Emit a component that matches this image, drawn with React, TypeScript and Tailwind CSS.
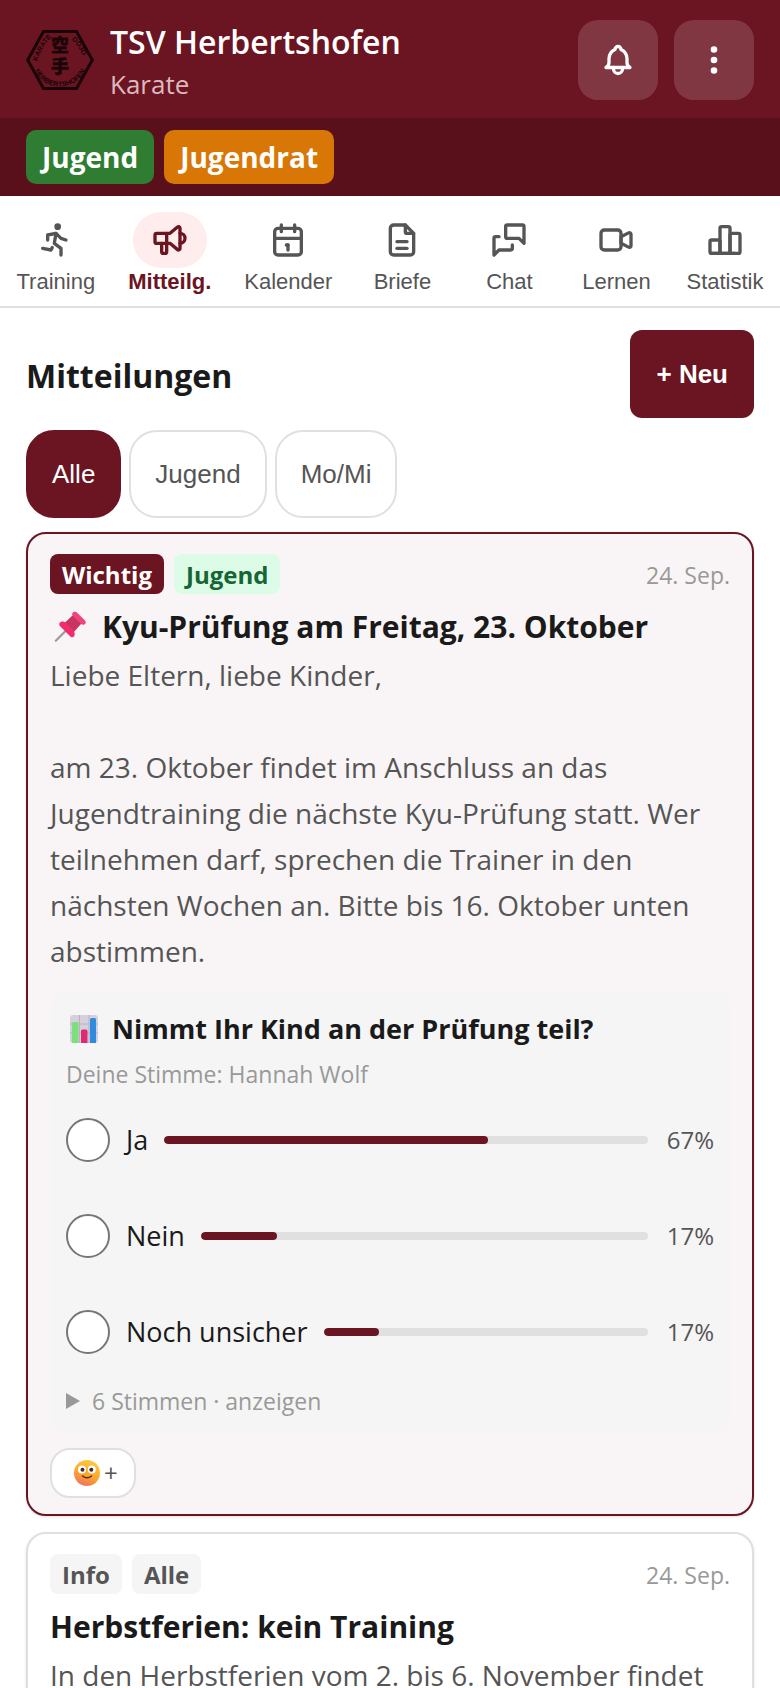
import React from "react";
import type { IconType } from "react-icons";
import {
  TbBell,
  TbCalendar,
  TbChartBar,
  TbDotsVertical,
  TbFileDescription,
  TbMessages,
  TbRun,
  TbSpeakerphone,
  TbVideo,
} from "react-icons/tb";

interface NavItem {
  label: string;
  icon: IconType;
  active?: boolean;
}

interface PollOption {
  id: string;
  label: string;
  percent: number;
}

interface Tag {
  label: string;
  className: string;
}

interface CardProps {
  tags: Tag[];
  date: string;
  title: string;
  text: string;
  pinned?: boolean;
  children?: React.ReactNode;
}

const navItems: NavItem[] = [
  { label: "Training", icon: TbRun },
  { label: "Mitteilg.", icon: TbSpeakerphone, active: true },
  { label: "Kalender", icon: TbCalendar },
  { label: "Briefe", icon: TbFileDescription },
  { label: "Chat", icon: TbMessages },
  { label: "Lernen", icon: TbVideo },
  { label: "Statistik", icon: TbChartBar },
];

const filters = ["Alle", "Jugend", "Mo/Mi"];

const pollOptions: PollOption[] = [
  { id: "ja", label: "Ja", percent: 67 },
  { id: "nein", label: "Nein", percent: 17 },
  { id: "unsicher", label: "Noch unsicher", percent: 17 },
];

const Logo = () => (
  <svg viewBox="0 0 68 60" className="h-[60px] w-[68px] shrink-0" role="img" aria-label="Karate Dojo Herbertshofen">
    <defs>
      <path id="logo-left" d="M11 33Q14 18 27 6" />
      <path id="logo-right" d="M42 7Q53 14 58 30" />
      <path id="logo-bottom" d="M8 37C15 63 53 63 60 37" />
    </defs>
    <path d="M17.5 1.5h33L66.3 30 50.5 58.5h-33L1.7 30z" fill="none" stroke="#190407" strokeWidth="3" />
    <g fill="#190407" fontFamily="'Liberation Sans', sans-serif" fontWeight="700" fontSize="7" textAnchor="middle">
      <text>
        <textPath href="#logo-left" startOffset="50%">
          KARATE
        </textPath>
      </text>
      <text>
        <textPath href="#logo-right" startOffset="50%">
          DOJO
        </textPath>
      </text>
      <text>
        <textPath href="#logo-bottom" startOffset="50%">
          HERBERTSHOFEN
        </textPath>
      </text>
    </g>
    <g
      fill="#190407"
      stroke="#190407"
      strokeWidth="0.4"
      fontFamily="'Noto Sans CJK JP', sans-serif"
      fontWeight="900"
      fontSize="18"
      textAnchor="middle"
    >
      <text x="34" y="22">空</text>
      <text x="34" y="43">手</text>
    </g>
  </svg>
);

const PinIcon = () => (
  <svg viewBox="0 0 32 32" className="size-8 shrink-0" aria-hidden="true">
    <path d="M13 18.5 1.8 29.8" stroke="#9b9b9b" strokeWidth="2.2" strokeLinecap="round" />
    <path d="m10.5 12 8.5-8 8.5 8.5-8.5 9.5z" fill="#c8365f" />
    <path
      d="M18.2 2.6c1-2.6 3.6-2.4 5.300-.6l7 7c1.800 1.800 1.600 3.900-.3 4.600-1.300.4-2.600-.2-3.600-1.200l-7-7c-.8-.8-1.600-1.600-1.400-2.800z"
      fill="#f0447c"
    />
    <path
      d="M6.2 11.2c1.8-1.2 4.3-.7 6.2 1.2l6.4 6.4c1.900 1.900 2.600 4.600 1.300 6.400-1.200 1.700-3 1-4.300-.3L6.400 15.500c-1.300-1.300-1.700-3.200-.2-4.300z"
      fill="#f22d6c"
    />
  </svg>
);

const ChartIcon = () => (
  <svg viewBox="0 0 28 28" className="size-7 shrink-0" aria-hidden="true">
    <rect width="28" height="28" rx="3" fill="#d6d0dc" />
    <path d="M0 9h28M0 18h28M9.5 0v28M19 0v28" stroke="#b9b2c2" strokeWidth="1" />
    <path d="M2 8.500a1.500 1.500 0 0 1 1.500-1.500H7a1.500 1.500 0 0 1 1.500 1.500V28H2z" fill="#7be07a" />
    <path d="M11 16a1.500 1.500 0 0 1 1.500-1.500H16a1.500 1.500 0 0 1 1.500 1.500v12H11z" fill="#e02a70" />
    <path d="M20 4.500A1.500 1.500 0 0 1 21.500 3h3A1.500 1.500 0 0 1 26 4.500V28h-6z" fill="#2f8be0" />
  </svg>
);

const SmileyIcon = () => (
  <svg viewBox="0 0 26 26" className="size-[26px]" aria-hidden="true">
    <defs>
      <linearGradient id="smiley" x1="0.7" y1="0" x2="0.3" y2="1">
        <stop offset="0" stopColor="#ffcb3d" />
        <stop offset="0.6" stopColor="#fba32c" />
        <stop offset="1" stopColor="#ef6d6a" />
      </linearGradient>
    </defs>
    <circle cx="13" cy="13" r="13" fill="url(#smiley)" />
    <circle cx="8" cy="9.5" r="4" fill="#fff" />
    <circle cx="17.8" cy="9.5" r="4" fill="#fff" />
    <circle cx="8.5" cy="9.7" r="2" fill="#43282b" />
    <circle cx="17.3" cy="9.7" r="2" fill="#43282b" />
    <path d="M8.5 16q4.500 3.600 9 0" fill="none" stroke="#5b2b20" strokeWidth="1.5" strokeLinecap="round" />
  </svg>
);

const Header = () => (
  <header>
    <div className="flex items-center gap-4 bg-[#6b1522] px-[26px] pt-[18px] pb-4">
      <Logo />
      <div className="flex-1 text-white">
        <p className="text-[32px] leading-[48px] font-semibold">TSV Herbertshofen</p>
        <p className="text-[26px] leading-9 text-[#deb8bf]">Karate</p>
      </div>
      <button
        type="button"
        aria-label="Benachrichtigungen"
        className="flex size-20 items-center justify-center rounded-[20px] bg-white/15 text-white"
      >
        <TbBell size={36} strokeWidth={2.2} />
      </button>
      <button
        type="button"
        aria-label="Menü"
        className="flex size-20 items-center justify-center rounded-[20px] bg-white/15 text-white"
      >
        <TbDotsVertical size={36} strokeWidth={2.4} />
      </button>
    </div>
    <div className="flex gap-[10px] bg-[#5a101b] px-[26px] py-3 text-[28px] leading-[54px] font-bold text-white">
      <span className="rounded-[10px] bg-[#2e7d32] px-4">Jugend</span>
      <span className="rounded-[10px] bg-[#d97706] px-4">Jugendrat</span>
    </div>
  </header>
);

const Navigation = () => (
  <nav className="flex border-b-2 border-[#e0e0e0] bg-white pt-4 pb-[10px] font-['Liberation_Sans',sans-serif]">
    {navItems.map(({ label, icon: Icon, active }) => (
      <a
        key={label}
        href="#"
        aria-current={active ? "page" : undefined}
        className={`flex grow flex-col items-center px-3 text-[22px] leading-7 ${
          active ? "font-bold text-[#6b1522]" : "text-[#555]"
        }`}
      >
        <span className={`flex h-14 w-[74px] items-center justify-center rounded-full ${active ? "bg-[#ffecec]" : ""}`}>
          <Icon size={40} />
        </span>
        {label}
      </a>
    ))}
  </nav>
);

const MessageCard = ({ tags, date, title, text, pinned, children }: CardProps) => (
  <article
    className={`rounded-[20px] border-2 px-[22px] pt-5 pb-4 shadow-sm ${
      pinned ? "border-[#6b1522] bg-[#f9f5f6]" : "border-[#e0e0e0] bg-white"
    }`}
  >
    <div className="flex items-center gap-[10px]">
      {tags.map((tag) => (
        <span key={tag.label} className={`rounded-lg px-3 pt-0.5 text-[24px] leading-[38px] font-bold ${tag.className}`}>
          {tag.label}
        </span>
      ))}
      <time className="ml-auto pt-0.5 text-[23px] leading-[38px] text-[#999]">{date}</time>
    </div>
    <h2 className="mt-2 flex items-center gap-4 text-[30px] leading-[50px] font-bold text-[#1a1a1a]">
      {pinned && (
        <span className="pl-1">
          <PinIcon />
        </span>
      )}
      {title}
    </h2>
    <p className="text-[28px] leading-[46px] whitespace-pre-line text-[#555]">{text}</p>
    {children}
  </article>
);

const Poll = () => (
  <section className="mt-4 rounded-2xl bg-[#f5f5f5] px-4 pt-4 pb-1.5">
    <h3 className="flex items-center gap-[14px] pl-1 text-[27px] leading-[46px] font-bold text-[#1a1a1a]">
      <ChartIcon />
      Nimmt Ihr Kind an der Prüfung teil?
    </h3>
    <p className="text-[23px] leading-[44px] text-[#999]">Deine Stimme: Hannah Wolf</p>
    <div className="flex flex-col gap-2">
      {pollOptions.map((option) => (
        <div key={option.id} className="flex h-[88px] items-center gap-4">
          <input
            type="radio"
            name="poll"
            id={option.id}
            className="size-11 shrink-0 appearance-none rounded-full border-2 border-[#767676] bg-white"
          />
          <label htmlFor={option.id} className="text-[27px] leading-9 text-[#1a1a1a]">
            {option.label}
          </label>
          <div className="h-2 flex-1 overflow-hidden rounded-full bg-[#e0e0e0]">
            <div className="h-full rounded-full bg-[#6b1522]" style={{ width: `${option.percent}%` }} />
          </div>
          <span className="w-[50px] text-right text-[24px] leading-9 text-[#555]">{option.percent}%</span>
        </div>
      ))}
    </div>
    <details>
      <summary className="flex list-none items-center gap-3 text-[23px] leading-[50px] text-[#999]">
        <svg viewBox="0 0 14 16" className="h-4 w-[14px]" aria-hidden="true">
          <path d="M0 0l14 8-14 8z" fill="currentColor" />
        </svg>
        6 Stimmen · anzeigen
      </summary>
    </details>
  </section>
);

const App = () => (
  <div className="h-screen overflow-hidden bg-white font-['Open_Sans',sans-serif]">
    <Header />
    <Navigation />
    <main className="px-[26px] pt-[22px]">
      <div className="flex items-center justify-between">
        <h1 className="pt-1 text-[32px] leading-[44px] font-bold text-[#1a1a1a]">Mitteilungen</h1>
        <button
          type="button"
          className="h-[88px] rounded-xl bg-[#6b1522] px-[26px] font-['Liberation_Sans',sans-serif] text-[26px] font-bold text-white"
        >
          + Neu
        </button>
      </div>
      <div className="mt-3 flex gap-2 font-['Liberation_Sans',sans-serif] text-[26px]">
        {filters.map((filter, idx) => (
          <button
            key={filter}
            type="button"
            className={`h-[88px] rounded-[28px] border-2 px-6 ${
              idx === 0 ? "border-[#6b1522] bg-[#6b1522] text-white" : "border-[#e0e0e0] bg-white text-[#555]"
            }`}
          >
            {filter}
          </button>
        ))}
      </div>

      <div className="mt-[14px] flex flex-col gap-4">
        <MessageCard
          pinned
          tags={[
            { label: "Wichtig", className: "bg-[#6b1522] text-white" },
            { label: "Jugend", className: "bg-[#dcfce7] text-[#166534]" },
          ]}
          date="24. Sep."
          title="Kyu-Prüfung am Freitag, 23. Oktober"
          text={
            "Liebe Eltern, liebe Kinder,\n\nam 23. Oktober findet im Anschluss an das Jugendtraining die nächste Kyu-Prüfung statt. Wer teilnehmen darf, sprechen die Trainer in den nächsten Wochen an. Bitte bis 16. Oktober unten abstimmen."
          }
        >
          <Poll />
          <button
            type="button"
            aria-label="Reaktion hinzufügen"
            className="mt-4 flex h-[50px] items-center gap-1 rounded-[20px] border-2 border-[#e0e0e0] bg-white pr-4 pl-[22px] text-[24px] text-[#555]"
          >
            <SmileyIcon />+
          </button>
        </MessageCard>
        <MessageCard
          tags={[
            { label: "Info", className: "bg-[#f5f5f5] text-[#555]" },
            { label: "Alle", className: "bg-[#f5f5f5] text-[#555]" },
          ]}
          date="24. Sep."
          title="Herbstferien: kein Training"
          text="In den Herbstferien vom 2. bis 6. November findet"
        />
      </div>
    </main>
  </div>
);

export default App;
